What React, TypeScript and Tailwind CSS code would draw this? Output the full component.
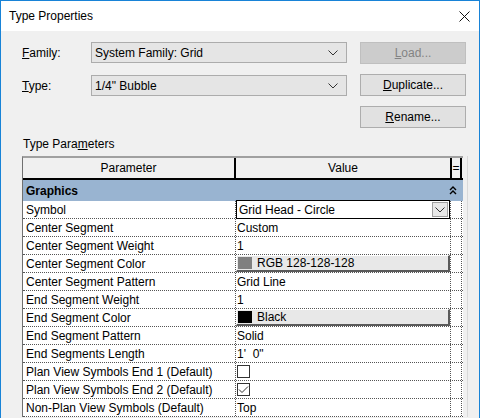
import React from 'react';

type Row = {
  name: string;
  kind: 'text' | 'combo' | 'color' | 'check';
  value?: string;
  swatch?: string;
  checked?: boolean;
};

const ROWS: Row[] = [
  { name: 'Symbol', kind: 'combo', value: 'Grid Head - Circle' },
  { name: 'Center Segment', kind: 'text', value: 'Custom' },
  { name: 'Center Segment Weight', kind: 'text', value: '1' },
  { name: 'Center Segment Color', kind: 'color', value: 'RGB 128-128-128', swatch: '#808080' },
  { name: 'Center Segment Pattern', kind: 'text', value: 'Grid Line' },
  { name: 'End Segment Weight', kind: 'text', value: '1' },
  { name: 'End Segment Color', kind: 'color', value: 'Black', swatch: '#000000' },
  { name: 'End Segment Pattern', kind: 'text', value: 'Solid' },
  { name: 'End Segments Length', kind: 'text', value: "1'  0\"" },
  { name: 'Plan View Symbols End 1 (Default)', kind: 'check', checked: false },
  { name: 'Plan View Symbols End 2 (Default)', kind: 'check', checked: true },
  { name: 'Non-Plan View Symbols (Default)', kind: 'text', value: 'Top' },
];

function Chevron({ className }: { className?: string }) {
  return (
    <svg width="10" height="6" viewBox="0 0 10 6" className={className}>
      <path d="M0.5 0.5 L5 5 L9.5 0.5" fill="none" stroke="#333" strokeWidth="1" />
    </svg>
  );
}

function ComboBox({ text }: { text: string }) {
  return (
    <div className="flex h-[21px] w-[256px] items-center justify-between border border-[#acacac] bg-[#e5e5e5] pl-[3px] pr-[8px]">
      <span>{text}</span>
      <Chevron />
    </div>
  );
}

function Button({ children, disabled }: { children: React.ReactNode; disabled?: boolean }) {
  return (
    <div
      className={
        disabled
          ? 'flex h-[22px] w-[106px] items-center justify-center border border-[#bfbfbf] bg-[#cccccc] text-[#838383]'
          : 'flex h-[22px] w-[106px] items-center justify-center border border-[#adadad] bg-[#e1e1e1]'
      }
    >
      {children}
    </div>
  );
}

function ValueCell({ row }: { row: Row }) {
  if (row.kind === 'combo') {
    return (
      <div className="-my-px flex h-[19px] flex-1 items-center justify-between border border-black bg-white pl-[2px]">
        <span>{row.value}</span>
        <div className="mr-px flex h-[15px] w-[16px] items-center justify-center border border-[#a0a0a0] bg-[#e8e8e8]">
          <Chevron />
        </div>
      </div>
    );
  }
  if (row.kind === 'color') {
    return (
      <div className="flex h-[17px] flex-1 items-center border-t border-l border-white border-r-2 border-b-2 border-r-[#5a5a5a] border-b-[#5a5a5a] bg-[#e8e8e8] pl-px">
        <div className="h-[12px] w-[14px]" style={{ background: row.swatch }} />
        <span className="ml-[5px]">{row.value}</span>
      </div>
    );
  }
  if (row.kind === 'check') {
    return (
      <div className="flex flex-1 items-center pl-[1px]">
        <div className="flex h-[13px] w-[13px] items-center justify-center border border-[#333] bg-white">
          {row.checked && (
            <svg width="11" height="9" viewBox="0 0 11 9">
              <path d="M1 4.5 L4 7.5 L10 1.5" fill="none" stroke="#333" strokeWidth="1" />
            </svg>
          )}
        </div>
      </div>
    );
  }
  return <div className="flex-1 whitespace-pre pl-[1px]">{row.value}</div>;
}

export default function App() {
  return (
    <div className="flex h-[418px] w-[480px] flex-col overflow-hidden border-x border-t border-[#1883d7] bg-[#f0f0f0] font-['Liberation_Sans',Arial,sans-serif] text-[12px] leading-none text-black">
      <div className="flex h-[30px] shrink-0 items-center justify-between bg-white pl-[8px] pr-[8px]">
        <span className="text-[12px]">Type Properties</span>
        <svg width="11" height="11" viewBox="0 0 11 11" className="mr-[1px]">
          <path d="M0.5 0.5 L10.5 10.5 M10.5 0.5 L0.5 10.5" stroke="#111" strokeWidth="1" />
        </svg>
      </div>

      <div className="flex flex-col pl-[21px] pt-[11px]">
        <div className="flex items-start">
          <div className="flex w-[69px] flex-col">
            <div className="flex h-[21px] items-center">
              <span><span className="underline">F</span>amily:</span>
            </div>
            <div className="mt-[12px] flex h-[21px] items-center">
              <span><span className="underline">T</span>ype:</span>
            </div>
          </div>
          <div className="flex flex-col gap-[12px]">
            <ComboBox text="System Family: Grid" />
            <ComboBox text={'1/4" Bubble'} />
          </div>
          <div className="ml-[13px] flex flex-col gap-[10px]">
            <Button disabled>
              <span><span className="underline">L</span>oad...</span>
            </Button>
            <Button>
              <span><span className="underline">D</span>uplicate...</span>
            </Button>
            <Button>
              <span><span className="underline">R</span>ename...</span>
            </Button>
          </div>
        </div>

        <div className="mt-[10px] pl-px">
          Type Para<span className="underline">m</span>eters
        </div>

        <div className="mt-[6px] flex w-[446px] border-r border-[#d9d9d9]">
          <div className="flex w-[441px] flex-col border-l border-t-2 border-[#a0a0a0] border-l-[#707070]">
            <div className="flex h-[22px] items-center border-b-2 border-black bg-[#f0f0f0]">
              <div className="flex h-full w-[213px] items-center justify-center border-r-2 border-black">Parameter</div>
              <div className="flex h-full w-[214px] items-center justify-center">Value</div>
              <div className="flex h-full w-[12px] items-center justify-center border-x-2 border-black">=</div>
            </div>
            <div className="flex h-[21px] items-center justify-between bg-[#99b4d1] pl-[3px] pr-[6px]">
              <span className="font-bold">Graphics</span>
              <svg width="8" height="9" viewBox="0 0 8 9">
                <path d="M1 4 L4 1 L7 4 M1 8 L4 5 L7 8" fill="none" stroke="#000" strokeWidth="1.4" />
              </svg>
            </div>
            {ROWS.map(r => (
              <div key={r.name} className="flex h-[18px] items-center border-b border-dotted border-[#555] bg-white">
                <div className="flex h-full w-[213px] items-center border-r border-dotted border-[#555] pl-[3px]">{r.name}</div>
                <div className="flex h-full w-[214px] items-center">
                  <ValueCell row={r} />
                </div>
                <div className="h-full w-[12px] border-x border-dotted border-[#555]" />
              </div>
            ))}
          </div>
        </div>
      </div>
    </div>
  );
}
